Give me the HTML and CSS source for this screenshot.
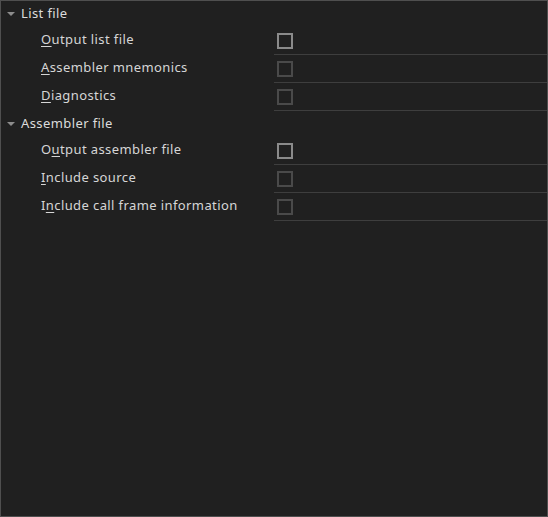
FILE: index.html
```html
<!DOCTYPE html>
<html lang="en">
<head>
  <meta charset="UTF-8">
  <title>Output options</title>
  <link rel="stylesheet" href="styles.css">
</head>
<body>
  <div class="panel">
    <!-- List file -->
    <div class="group">
      <div class="group-head"><span class="arrow"></span>List file</div>
      <div class="row">
        <div class="label"><u>O</u>utput list file</div>
        <div class="value"><span class="check"></span></div>
      </div>
      <div class="row">
        <div class="label"><u>A</u>ssembler mnemonics</div>
        <div class="value"><span class="check disabled"></span></div>
      </div>
      <div class="row">
        <div class="label"><u>D</u>iagnostics</div>
        <div class="value"><span class="check disabled"></span></div>
      </div>
    </div>

    <!-- Assembler file -->
    <div class="group">
      <div class="group-head"><span class="arrow"></span>Assembler file</div>
      <div class="row">
        <div class="label">O<u>u</u>tput assembler file</div>
        <div class="value"><span class="check"></span></div>
      </div>
      <div class="row">
        <div class="label"><u>I</u>nclude source</div>
        <div class="value"><span class="check disabled"></span></div>
      </div>
      <div class="row">
        <div class="label">I<u>n</u>clude call frame information</div>
        <div class="value"><span class="check disabled"></span></div>
      </div>
    </div>
  </div>
</body>
</html>
```

FILE: styles.css
```css
html, body {
  margin: 0;
  padding: 0;
  background: #202020;
}

.panel {
  box-sizing: border-box;
  width: 548px;
  height: 517px;
  border: 1px solid #4f4f4f;
  background: #202020;
  color: #d6d6d6;
  font-family: "Noto Sans", "DejaVu Sans", sans-serif;
  font-size: 13px;
  letter-spacing: 0.4px;
}

.group-head {
  display: flex;
  align-items: center;
  height: 26px;
  padding-left: 6px;
  padding-bottom: 2px;
  box-sizing: border-box;
  color: #dcdcdc;
}

.arrow {
  width: 0;
  height: 0;
  border-left: 4px solid transparent;
  border-right: 4px solid transparent;
  border-top: 4px solid #8c8c8c;
  margin-right: 6px;
  margin-top: 1px;
}

.row {
  display: grid;
  grid-template-columns: 273px 1fr;
  height: 28px;
}

.label {
  padding-left: 40px;
  line-height: 24px;
  white-space: nowrap;
}

.label u {
  text-underline-offset: 2px;
}

.value {
  border-bottom: 1px solid #3e3e3e;
  padding-left: 3px;
  padding-top: 6px;
}

.check {
  display: block;
  box-sizing: border-box;
  width: 16px;
  height: 16px;
  border: 2px solid #8a8a8a;
}

.check.disabled {
  border-color: #4a4a4a;
}
```
